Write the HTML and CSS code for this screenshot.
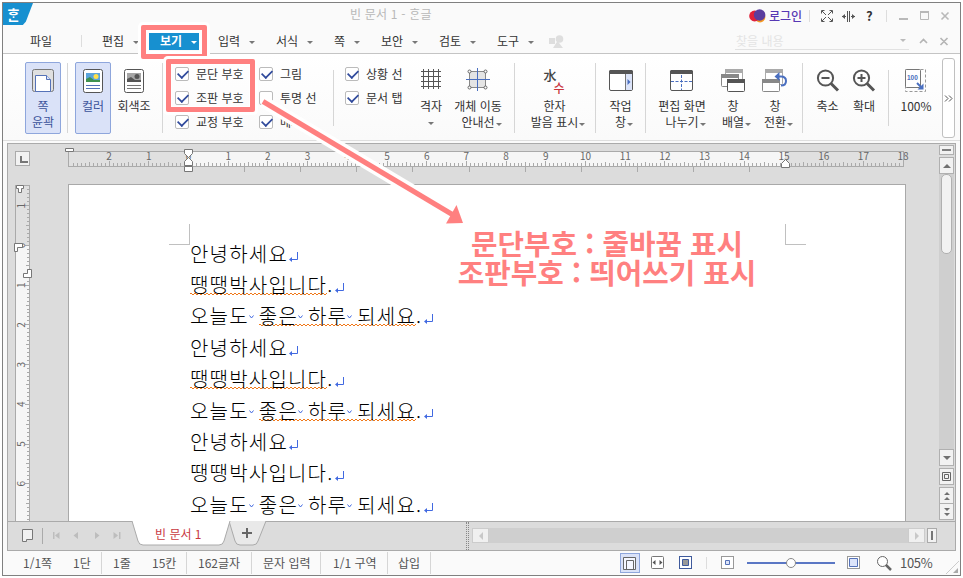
FILE: index.html
```html
<!DOCTYPE html>
<html lang="ko">
  <head>
    <meta charset="UTF-8" />
    <meta name="viewport" content="width=device-width, initial-scale=1.0" />
    <title>빈 문서 1 - ᄒᆞᆫ글</title>
    <link rel="stylesheet" href="styles.css">
  </head>
  <body>
    <div class="window">
      <header class="titlebar">
        <div class="app-logo"><span>ᄒᆞᆫ</span></div>
        <div class="doc-title">빈 문서 1 - ᄒᆞᆫ글</div>
        <div class="title-actions">
          <svg class="account-icon" width="17" height="14" viewBox="0 0 17 14">
            <circle cx="11" cy="8" r="5.4" fill="#f59a23" />
            <circle cx="5.6" cy="7" r="5.4" fill="#e0213a" />
            <circle cx="10.6" cy="6" r="5.8" fill="#5a3d9e" />
          </svg>
          <span class="login">로그인</span>
          <i class="bar"></i>
          <svg class="ic-full" width="12" height="12" viewBox="0 0 12 12" fill="none" stroke="#555">
            <path d="M.5 3.5v-3h3M8.500 .5h3v3M11.500 8.500v3h-3M3.500 11.500h-3v-3M1 1l4 4M11 1L7 5M11 11L7 7M1 11l4-4" />
          </svg>
          <svg class="ic-split" width="13" height="11" viewBox="0 0 13 11" fill="none" stroke="#555">
            <path d="M5.500 0v11M7.500 0v11M0 5.500h4M9 5.500h4" />
            <path d="M0 5.500l3-2.500v5zM13 5.500l-3-2.500v5z" fill="#555" stroke="none" />
          </svg>
          <span class="help">?</span>
          <i class="bar bar-win"></i>
          <svg class="ic-win" width="51" height="12" viewBox="0 0 51 12" fill="none" stroke="#b9b9b9">
            <path d="M0 9h9" stroke-width="2" />
            <path d="M21.500 2.500h8v7h-8z" />
            <path d="M21 2h9" stroke-width="2" />
            <path d="M42.500 2.500l7 7M49.500 2.500l-7 7" stroke-width="1.600" />
          </svg>
        </div>
      </header>

      <nav class="menubar">
        <span class="menu file">파일</span>
        <i class="bar"></i>
        <span class="menu first">편집<b class="caret"></b></span>
        <span class="menu active">보기<b class="caret"></b></span>
        <span class="menu">입력<b class="caret"></b></span>
        <span class="menu">서식<b class="caret"></b></span>
        <span class="menu short">쪽<b class="caret"></b></span>
        <span class="menu">보안<b class="caret"></b></span>
        <span class="menu">검토<b class="caret"></b></span>
        <span class="menu last">도구<b class="caret"></b></span>
        <svg width="15" height="13" viewBox="0 0 15 13" fill="#dedede">
          <path d="M0 3h6v6H0zM4 13l4.500-7 5.500 7z" />
          <circle cx="10.500" cy="4" r="3.800" />
        </svg>
        <div class="search"><span>찾을 내용</span><b class="caret"></b></div>
        <svg class="menu-tools" width="32" height="10" viewBox="0 0 32 10" fill="none" stroke="#b4b4b4" stroke-width="1.600">
          <path d="M1 7l3.500-3.500L8 7M21.500 2l7 7M28.500 2l-7 7" />
        </svg>
      </nav>

      <section class="ribbon">
        <div class="tool outline selected">
          <svg width="22" height="24" viewBox="0 0 22 24" fill="none">
            <rect x=".5" y=".5" width="21" height="22" rx="2" fill="#e0e0e0" stroke="#777" />
            <path d="M3.500 22.500v-16h11l4 4v12z" fill="#fff" stroke="#5572b8" />
            <path d="M14.500 6.500v4h4" stroke="#5572b8" fill="#dce4f9" />
          </svg>
          <span>쪽</span><span>윤곽</span>
        </div>
        <i class="sep sep-a"></i>
        <div class="tool color selected">
          <svg width="20" height="24" viewBox="0 0 20 24" fill="none">
            <rect x=".5" y=".5" width="19" height="23" rx="2" fill="#fff" stroke="#555" />
            <rect x="3" y="4" width="14" height="9" fill="#5ba4dc" />
            <path d="M3 13v-3l4-2 4 3h6v2z" fill="#3f9150" />
            <circle cx="13" cy="7.500" r="2.500" fill="#ffe04a" />
            <path d="M3 16.500h14M3 19.500h14" stroke="#5572b8" />
          </svg>
          <span>컬러</span>
        </div>
        <div class="tool gray">
          <svg width="20" height="24" viewBox="0 0 20 24" fill="none">
            <rect x=".5" y=".5" width="19" height="23" rx="2" fill="#fff" stroke="#555" />
            <rect x="3" y="4" width="14" height="9" fill="#a5a5a5" />
            <path d="M3 13v-3l4-2 4 3h6v2z" fill="#555" />
            <circle cx="13" cy="7.500" r="2.500" fill="#555" />
            <path d="M3 16.500h14M3 19.500h14" stroke="#777" />
          </svg>
          <span>회색조</span>
        </div>
        <i class="sep sep-b"></i>
        <div class="checks checks-marks">
          <label><i class="check on"></i>문단 부호</label>
          <label><i class="check on"></i>조판 부호</label>
          <label><i class="check on"></i>교정 부호</label>
        </div>
        <div class="checks checks-show">
          <label><i class="check on"></i>그림</label>
          <label><i class="check"></i>투명 선</label>
          <label><i class="check on"></i>메모</label>
        </div>
        <i class="sep sep-c"></i>
        <div class="checks checks-ui">
          <label><i class="check on"></i>상황 선</label>
          <label><i class="check on"></i>문서 탭</label>
        </div>
        <div class="tool grid">
          <svg width="20" height="24" viewBox="0 0 20 24" fill="none" stroke="#555">
            <path d="M2.500 0v20M7.500 0v20M12.500 0v20M17.500 0v20M0 2.500h20M0 7.500h20M0 12.500h20M0 17.500h20" />
          </svg>
          <span>격자</span><span class="drop"><b class="caret"></b></span>
        </div>
        <div class="tool guide">
          <svg width="24" height="24" viewBox="0 0 24 24" fill="none">
            <rect x="3.500" y="2.500" width="16" height="16" fill="#e4e4e4" stroke="#888" />
            <path d="M11.500 -1v23M0 10.500h24" stroke="#4a6fc0" />
            <g fill="#fff" stroke="#666"><circle cx="3.500" cy="2.500" r="1.500" /><circle cx="19.500" cy="2.500" r="1.500" /><circle cx="3.500" cy="18.500" r="1.500" /><circle cx="19.500" cy="18.500" r="1.500" /></g>
          </svg>
          <span>개체 이동</span><span>안내선<b class="caret"></b></span>
        </div>
        <i class="sep sep-d"></i>
        <div class="tool hanja">
          <div class="hanja-icon"><b>水</b><em>수</em></div>
          <span>한자</span><span>발음 표시<b class="caret"></b></span>
        </div>
        <i class="sep"></i>
        <div class="tool pane">
          <svg width="24" height="24" viewBox="0 0 24 24" fill="none">
            <rect x=".5" y="1.500" width="23" height="20" rx="1.500" fill="#fff" stroke="#555" />
            <path d="M0 4V2.500Q0 1 1.500 1h21Q24 1 24 2.500V5H0z" fill="#555" />
            <path d="M16.500 5h6.500v16h-6.500z" fill="#dce4f9" />
            <path d="M16.500 5v16" stroke="#777" /><path d="M18.500 10v6l3-3z" fill="#4a6fc0" />
          </svg>
          <span>작업</span><span>창<b class="caret"></b></span>
        </div>
        <i class="sep"></i>
        <div class="tool divide">
          <svg width="24" height="24" viewBox="0 0 24 24" fill="none">
            <rect x=".5" y="1.500" width="22" height="20" rx="1.500" fill="#fff" stroke="#555" />
            <path d="M0 5V2.500Q0 1 1.500 1h20Q23 1 23 2.500V5z" fill="#555" />
            <path d="M11.500 6v15M1 12.500h21" stroke="#4a6fc0" stroke-dasharray="3 1.500" />
          </svg>
          <span>편집 화면</span><span>나누기<b class="caret"></b></span>
        </div>
        <div class="tool arrange">
          <svg width="24" height="24" viewBox="0 0 24 24">
            <rect x="4.500" y=".5" width="17" height="12" rx="1" fill="#fff" stroke="#aaa" /><path d="M4 0h18v4H4z" fill="#aaa" />
            <rect x=".5" y="5.500" width="17" height="12" rx="1" fill="#fff" stroke="#888" /><path d="M0 5h18v4H0z" fill="#888" />
            <rect x="6.500" y="10.500" width="17" height="12" rx="1" fill="#fff" stroke="#555" /><path d="M6 10h18v4H6z" fill="#555" />
          </svg>
          <span>창</span><span>배열<b class="caret"></b></span>
        </div>
        <div class="tool switch">
          <svg width="26" height="24" viewBox="0 0 26 24">
            <rect x="3.500" y=".5" width="17" height="15" rx="1" fill="#fff" stroke="#aaa" /><path d="M3 0h18v4H3z" fill="#aaa" />
            <rect x=".5" y="10.500" width="17" height="12" rx="1" fill="#fff" stroke="#888" /><path d="M0 10h18v4H0z" fill="#888" />
            <path d="M16 7.500h3q5 0 5 4.500t-5 4.500" fill="none" stroke="#4a6fc0" stroke-width="2" /><path d="M12.500 7.500l5-4.500v9z" fill="#4a6fc0" />
          </svg>
          <span>창</span><span>전환<b class="caret"></b></span>
        </div>
        <i class="sep"></i>
        <div class="tool zoom-out">
          <svg width="24" height="24" viewBox="0 0 24 24" fill="none" stroke="#555">
            <circle cx="9.500" cy="9" r="7.600" stroke-width="2" /><path d="M5.500 9h8" stroke-width="2" /><path d="M15 14.500l7 7" stroke-width="3" />
          </svg>
          <span>축소</span>
        </div>
        <div class="tool zoom-in">
          <svg width="24" height="24" viewBox="0 0 24 24" fill="none" stroke="#555">
            <circle cx="9.500" cy="9" r="7.600" stroke-width="2" /><path d="M5.500 9h8M9.500 5v8" stroke-width="2" /><path d="M15 14.500l7 7" stroke-width="3" />
          </svg>
          <span>확대</span>
        </div>
        <i class="sep sep-e"></i>
        <div class="tool full">
          <svg width="22" height="24" viewBox="0 0 22 24" fill="none">
            <rect x=".5" y=".5" width="20" height="22" stroke="#999" stroke-dasharray="3 2" />
            <rect x=".5" y=".5" width="15" height="18" rx="1" fill="#fff" stroke="#777" />
            <text x="2" y="11" class="hundred">100</text>
            <path d="M12 14l5 5" stroke="#4a6fc0" stroke-width="2" /><path d="M18.500 20.500v-6l-6 6z" fill="#4a6fc0" />
          </svg>
          <span>100%</span>
        </div>
        <div class="more">
          <svg width="9" height="7" viewBox="0 0 9 7" fill="none" stroke="#555"><path d="M1 .5l3 3-3 3M5 .5l3 3-3 3" /></svg>
        </div>
      </section>

      <main class="workspace">
        <div class="editor">
          <div class="side">
            <div class="tab-type"></div>
            <svg id="vruler" width="18" height="337" viewBox="0 0 18 337"></svg>
          </div>
          <div class="canvas">
            <svg id="hruler" width="846" height="28" viewBox="0 0 846 28"></svg>
            <article class="page">
              <i class="crop crop-left"></i>
              <i class="crop crop-right"></i>
              <div id="lines"></div>
            </article>
          </div>
          <div class="vscroll">
            <div class="sbtn split"><svg width="9" height="2"><path d="M0 0h9v2H0z" fill="#808080" /></svg></div>
            <div class="sbtn up"><svg width="8" height="4"><path d="M0 4l4-4 4 4z" fill="#707070" /></svg></div>
            <div class="track"><div class="thumb"></div></div>
            <div class="sbtn"><svg width="8" height="4"><path d="M0 0h8L4 4z" fill="#707070" /></svg></div>
            <div class="sbtn target"><svg width="9" height="9" fill="none" stroke="#666"><path d="M.5.5h8v8h-8zM2.500 2.500h4v4h-4z" /></svg></div>
            <div class="sbtn prev"><svg width="6" height="8" fill="#707070"><path d="M0 3l3-3 3 3zM0 8l3-3 3 3z" /></svg></div>
            <div class="sbtn next"><svg width="6" height="8" fill="#707070"><path d="M0 0h6L3 3zM0 5h6L3 8z" /></svg></div>
          </div>
        </div>
        <div class="tabstrip">
          <svg class="tab-nav" width="102" height="18" viewBox="0 0 102 18" fill="none">
            <path d="M1.500 2.500h10v10h-6v2h-4z" stroke="#777" fill="#f0f0f0" />
            <path d="M21.500 1v16" stroke="#aaa" />
            <g fill="#bdbdbd"><path d="M32 5h1.500v7H32zM38.500 5v7L34 8.500zM57 5v7l-4.500-3.500zM74 5v7l4.500-3.500zM92.500 5v7L97 8.500zM98 5h1.500v7H98z" /></g>
          </svg>
          <div class="doc-tab">
            <svg width="138" height="26" viewBox="0 0 138 26">
              <path d="M97 0l6 20q1 4 5 4h13q4 0 5-4l8-20" fill="#e9e9e9" stroke="#aaa" />
              <path d="M0 0l6 20q1 4 5 4h76q4 0 5-4l6-20" fill="#fff" stroke="#aaa" />
              <path d="M110 12h10M115 7v10" stroke="#666" stroke-width="2" />
            </svg>
            <span>빈 문서 1</span>
          </div>
          <i class="grip"></i>
          <div class="hscroll">
            <div class="hbtn"><svg width="4" height="8"><path d="M4 0v8L0 4z" fill="#c8c8c8" /></svg></div>
            <div class="htrack"></div>
            <div class="hbtn"><svg width="4" height="8"><path d="M0 0v8l4-4z" fill="#c8c8c8" /></svg></div>
          </div>
          <div class="hsplit"><i></i></div>
        </div>
      </main>

      <footer class="status">
        <span class="st-page">1/1쪽</span><span class="st-col">1단</span>
        <span class="st-line">1줄</span><span class="st-char">15칸</span>
        <span class="st-count">162글자</span><span class="st-mode">문자 입력</span>
        <span class="st-section">1/1 구역</span><span class="st-insert">삽입</span>
        <div class="view-tools">
          <div class="view-btn on"><svg width="14" height="14" fill="#f5f7ff" stroke="#666"><path d="M.5.5h12v12H.5zM3.500 12.500v-9h7v9" /></svg></div>
          <svg class="v-width" width="14" height="14" fill="none" stroke="#777"><rect x=".5" y=".5" width="12" height="12" rx="1" fill="#fff" /><path d="M1.500 6.500l3-2.500v5zM11.500 6.500l-3-2.500v5z" fill="#555" stroke="none" /></svg>
          <svg class="v-whole" width="14" height="14"><rect x=".5" y=".5" width="12" height="12" fill="#fff" stroke="#3f5a9c" /><path d="M3.500 3.500h6v6h-6z" fill="#999" stroke="#3f5a9c" /></svg>
          <i class="bar"></i>
          <svg class="v-small" width="14" height="14"><rect x=".5" y=".5" width="12" height="12" fill="#fff" stroke="#999" /><path d="M4.500 4.500h4v4h-4z" fill="#dce4f9" stroke="#5572b8" /></svg>
          <div class="slider"><i></i></div>
          <svg class="v-large" width="14" height="14"><rect x=".5" y=".5" width="12" height="12" fill="#fff" stroke="#999" /><path d="M2.500 2.500h8v8h-8z" fill="#dce4f9" stroke="#5572b8" /></svg>
          <svg class="v-zoom" width="16" height="15" fill="none" stroke="#666"><circle cx="5.500" cy="5.500" r="5" fill="#fff" /><path d="M9 9l5 5" stroke-width="2.500" /></svg>
          <span class="percent">105%</span>
          <svg class="resize" width="15" height="15" fill="none" stroke="#ccc"><path d="M1 14L14 1" /><path d="M8 13h5V8z" fill="#aaa" stroke="none" /></svg>
        </div>
      </footer>
    </div>

    <!-- tutorial callouts -->
    <div class="callout callout-menu"></div>
    <div class="callout callout-checks"></div>
    <svg class="arrow" width="210" height="132" viewBox="0 0 210 132">
      <path d="M3 5.500L196 120.500" stroke="#fff" stroke-width="12" />
      <path d="M3 5.500L194 119.500" stroke="#ff8080" stroke-width="5" />
      <path d="M203 127l-6.500-18L186 127.500z" fill="#ff8080" />
    </svg>
    <div class="note">
      <div>문단부호 : 줄바꿈 표시</div>
      <div>조판부호 : 띄어쓰기 표시</div>
    </div>

    <script>
      // Horizontal ruler, 0 sits at the left text margin
      const CM = 39.7;
      let h = '<path class="r-off" d="M8 7h836v15H8z" /><path class="r-on" d="M128 7h597v15H128z" />';
      for (let i = -30; i <= 179; i++) {
        const x = Math.round(128 + (i * CM) / 10) + 0.5;
        if (x < 10 || x > 843) continue;
        const len = i % 10 === 0 ? 5 : i % 5 === 0 ? 4 : 3;
        h += `<path d="M${x} ${22 - len}v${len}" />`;
      }
      for (let i = -2; i <= 18; i++) {
        h += `<text x="${128.5 + i * CM}" y="16">${Math.abs(i)}</text>`;
      }
      for (let i = 1; i <= 10; i++) {
        h += `<path d="M${Math.round(128 + i * 56.1) + 0.5} 22v6" />`;
      }
      h += '<path d="M8 7.500h836M8 22.500h836M8.500 5v18M843.500 7v16" />';
      h += '<path class="knob" d="M5.500 4.500h8v3h-8zM124.500 5.500h8v4l-4 4 4 4v4h-8v-4l4-4-4-4zM124.500 22.500h8v5h-8zM721.500 23.500v-4l4-4 4 4v4z" />';
      document.getElementById("hruler").innerHTML = h;

      // Vertical ruler
      let v = '<path class="r-off" d="M1 0h14v60H1z" /><path class="r-on" d="M1 60h14v277H1z" />';
      for (let i = -14; i <= 69; i++) {
        const y = Math.round(60 + (i * CM) / 10) + 0.5;
        const len = i % 10 === 0 ? 5 : i % 5 === 0 ? 4 : 3;
        v += `<path d="M${15 - len} ${y}h${len}" />`;
      }
      for (let i = -1; i <= 6; i++) {
        v += `<text transform="translate(9.500 ${60.5 + i * CM}) rotate(-90)">${Math.abs(i)}</text>`;
      }
      v += '<path d="M.5 0v337M14.500 0v337M0 .5h15" />';
      v += '<path class="knob" d="M1.500.5h7v3h-2v4h-3v-4h-2zM-.5 58.500h8v4h-5v4h-3zM8.500 88.500v4h8v-8h-4v4z" />';
      document.getElementById("vruler").innerHTML = v;

      // Document text with paragraph and space marks
      const enter = '<svg class="enter" width="10" height="10"><path d="M8.500 0v7.500H3" fill="none" stroke="#4169e1" /><path d="M0 7.500L3 5v5z" fill="#4169e1" /></svg>';
      const gap = '<svg class="gap" width="10" height="5"><path d="M.5.5l2 2.500 2-2.500" fill="none" stroke="#4169e1" /></svg>';
      let html = "";
      for (let i = 0; i < 3; i++) {
        const typo = i < 2 ? "typo" : "";
        html += `<p>안녕하세요${enter}</p>`;
        html += `<p class="dot"><span class="${typo}">땡땡박사입니다</span>.${enter}</p>`;
        html += `<p class="dot">오늘도${gap}<span class="${typo}">좋은${gap}하루${gap}되세요</span>.${enter}</p>`;
      }
      document.getElementById("lines").innerHTML = html;
    </script>
  </body>
</html>
```
FILE: styles.css
```css
* {
  box-sizing: border-box;
}
body {
  margin: 0;
  padding: 2px;
  height: 578px;
  overflow: hidden;
  background: #fff;
  color: #333;
  font: 12px/16px "Noto Sans CJK KR", "Noto Sans", sans-serif;
}
svg {
  flex-shrink: 0;
  overflow: visible;
}
.window {
  width: 959px;
  height: 574px;
  border: 1px solid #808080;
  background: #fafafa;
}
.bar {
  width: 1px;
  height: 12px;
  background: #ddd;
}
.caret {
  display: inline-block;
  width: 0;
  border: 3px solid transparent;
  border-top: 3px solid #777;
  border-bottom: 0;
}

/* title bar */
.titlebar {
  display: flex;
  height: 26px;
  align-items: center;
}
.app-logo {
  width: 30px;
  height: 22px;
  align-self: flex-start;
  padding: 3px 0 0 4px;
  background: #1790d0;
  clip-path: polygon(0 0, 100% 0, 76% 85%, 66% 100%, 0 100%);
  color: #fff;
  font-size: 14px;
  font-weight: bold;
}
.doc-title {
  margin: 0 0 4px 317px;
  color: #b8b8b8;
  letter-spacing: 0.2px;
}
.title-actions {
  display: flex;
  align-items: center;
  margin-left: auto;
  padding-right: 10px;
}
.login {
  margin-left: 3px;
  width: 40px;
  color: #5738b4;
  font-weight: 500;
}
.ic-full {
  margin-left: 11px;
}
.ic-split {
  margin-left: 9px;
}
.help {
  width: 20px;
  margin-left: 11px;
  font-weight: bold;
  font-size: 13px;
}
.bar-win {
  margin-right: 12px;
}

/* menu */
.menubar {
  display: flex;
  height: 25px;
  align-items: center;
  border-bottom: 1px solid #c4c4c4;
}
.menu {
  display: flex;
  align-items: center;
  width: 58px;
  height: 18px;
  padding-left: 11px;
}
.menu .caret {
  margin: 2px 0 0 9px;
}
.menu.file {
  width: 78px;
  padding-left: 27px;
}
.menu.first {
  width: 67px;
  padding-left: 20px;
}
.menu.short {
  width: 47px;
}
.menu.active {
  width: 50px;
  margin-right: 8px;
  background: #1790d0;
  color: #fff;
  font-weight: bold;
}
.menu.active .caret {
  border-top-color: #fff;
}
.menu.last {
  margin-right: 5px;
}
.search {
  display: flex;
  justify-content: space-between;
  align-items: center;
  width: 174px;
  margin-left: auto;
  padding: 0 3px 0 1px;
  border-bottom: 1px solid #e2e2e2;
  color: #e4e4e4;
}
.search .caret {
  border-top-color: #bbb;
}
.menu-tools {
  margin: 0 9px 0 10px;
}

/* ribbon */
.ribbon {
  display: flex;
  height: 87px;
  padding: 4px 5px 3px 22px;
  background: linear-gradient(#fff, #fafafa);
  border-bottom: 1px solid #dedede;
}
.sep {
  flex: none;
  width: 1px;
  height: 70px;
  margin-top: 5px;
  background: #d6d6d6;
}
.sep-a {
  margin: 5px 7px 0 6px;
}
.sep-b {
  margin: 5px 12px 0 5px;
}
.sep-c {
  height: 56px;
  margin: 12px 11px 0 0;
}
.sep-d {
  margin-left: 9px;
}
.sep-e {
  height: 56px;
  margin: 12px 0 0 12px;
}
.tool {
  display: flex;
  flex: none;
  flex-direction: column;
  align-items: center;
  height: 72px;
  margin-top: 4px;
  padding-top: 7px;
  white-space: nowrap;
}
.tool svg {
  margin-bottom: 5px;
}
.tool span .caret {
  margin: 0 -7px 1px 1px;
}
.tool span.drop .caret {
  margin: 0 0 2px;
}
.selected {
  border: 1px solid #8ea6dc;
  border-radius: 2px;
  background: #dae2f8;
  padding-top: 6px;
  color: #3a529a;
}
.outline,
.color {
  width: 36px;
}
.gray {
  width: 46px;
}
.grid {
  width: 40px;
}
.guide {
  width: 54px;
}
.hanja {
  width: 79px;
  margin-right: 1px;
}
.pane {
  width: 49px;
}
.divide {
  width: 72px;
}
.arrange {
  width: 30px;
}
.switch {
  width: 54px;
}
.zoom-out {
  width: 49px;
}
.zoom-in {
  width: 24px;
}
.full {
  width: 53px;
  padding-left: 1px;
}
.hundred {
  fill: #4a6fc0;
  font: bold 6.5px "Liberation Sans", sans-serif;
}
.hanja-icon {
  display: flex;
  width: 22px;
  height: 29px;
  font-size: 13px;
  line-height: 12px;
}
.hanja-icon b {
  color: #444;
  font-weight: 500;
}
.hanja-icon em {
  margin: 13px 0 0 -3px;
  color: #c8343c;
  font-size: 12px;
  font-style: normal;
  font-weight: 500;
}
.checks {
  flex: none;
  padding-top: 4px;
  white-space: nowrap;
}
.checks label {
  display: flex;
  align-items: center;
  height: 24px;
}
.checks-marks {
  width: 84px;
}
.checks-show {
  width: 74px;
}
.checks-ui {
  width: 66px;
}
.check {
  width: 14px;
  height: 14px;
  margin-right: 7px;
  border: 1px solid #bbb;
  border-radius: 2px;
  background: #fff;
}
.check.on::before {
  content: "";
  display: block;
  width: 10px;
  height: 6px;
  margin: 1px 0 0 1px;
  border: solid #304a9c;
  border-width: 0 0 2.5px 2.5px;
  transform: rotate(-45deg) scale(0.85);
}
.more {
  display: flex;
  flex: none;
  align-items: center;
  justify-content: center;
  width: 13px;
  height: 80px;
  border: 1px solid #c0c0c0;
  border-radius: 3px;
  background: #fff;
}

/* workspace */
.workspace {
  width: 949px;
  height: 408px;
  margin: 2px 0 0 4px;
  border: 1px solid #aaa;
  background: #dcdcdc;
}
.editor {
  display: flex;
  height: 377px;
  overflow: hidden;
}
.side {
  flex: none;
  width: 52px;
  padding: 7px 0 0 7px;
}
.tab-type {
  width: 15px;
  height: 15px;
  margin-bottom: 19px;
  padding: 4px 0 0 4px;
  border: 1px solid #aaa;
  background: #f2f2f2;
}
.tab-type::before {
  content: "";
  display: block;
  width: 6px;
  height: 5px;
  border: solid #777;
  border-width: 0 0 2px 2px;
}
#vruler,
#hruler {
  display: block;
  fill: none;
  stroke: #aaa;
}
#vruler text,
#hruler text {
  fill: #666;
  stroke: none;
  font-size: 10px;
  text-anchor: middle;
}
#vruler .r-off,
#hruler .r-off {
  fill: #e0e0e0;
  stroke: none;
}
#vruler .r-on,
#hruler .r-on {
  fill: #f6f6f6;
  stroke: none;
}
#vruler .knob,
#hruler .knob {
  fill: #fff;
  stroke: #777;
}
.canvas {
  flex: none;
  width: 879px;
}
.page {
  position: relative;
  width: 838px;
  height: 400px;
  margin: 12px 0 0 8px;
  padding: 53px 0 0 121px;
  border: 1px solid #a9a9a9;
  background: #fff;
}
.page p {
  display: flex;
  height: 31.4px;
  margin: 0;
  align-items: center;
  color: #000;
  font-size: 20px;
  font-weight: 300;
  letter-spacing: 1.2px;
  line-height: 28px;
}
.page span {
  display: flex;
  align-items: center;
}
.typo {
  height: 20px;
  background:
    repeating-linear-gradient(90deg, #f07818 0 2px, transparent 2px 4px) 0 18px / 100% 1px no-repeat,
    repeating-linear-gradient(90deg, transparent 0 2px, #f07818 2px 4px) 0 19px / 100% 1px no-repeat;
}
.enter {
  margin: 6px 0 0 1px;
}
.dot .enter {
  margin-left: 2px;
}
.gap {
  margin-top: 3px;
}
.crop {
  position: absolute;
  top: 39px;
  width: 21px;
  height: 21px;
  border-bottom: 1px solid #c0c0c0;
}
.crop-left {
  left: 100px;
  border-right: 1px solid #c0c0c0;
}
.crop-right {
  left: 716px;
  border-left: 1px solid #c0c0c0;
}
.vscroll {
  display: flex;
  flex: none;
  flex-direction: column;
  width: 15px;
  padding: 1px 0;
}
.sbtn {
  display: flex;
  flex: none;
  align-items: center;
  justify-content: center;
  height: 17px;
  border: 1px solid #b0b0b0;
  background: #f2f2f2;
}
.split {
  height: 10px;
  margin-bottom: 2px;
}
.track {
  flex: 1;
  padding: 0 2px;
  background: #cfcfcf;
}
.thumb {
  width: 11px;
  height: 80px;
  border: 1px solid #b0b0b0;
  border-radius: 5px;
  background: #f2f2f2;
}
.target {
  margin: 2px 0;
}
.next {
  margin-top: -1px;
}

/* document tabs */
.tabstrip {
  display: flex;
  height: 29px;
  border-top: 1px solid #aaa;
}
.tab-nav {
  margin: 5px 0 0 13px;
}
.doc-tab {
  position: relative;
  width: 138px;
  margin-left: 9px;
}
.doc-tab svg {
  display: block;
  margin-top: -1px;
}
.doc-tab span {
  position: absolute;
  top: 4px;
  left: 23px;
  color: #c9393f;
}
.grip {
  width: 3px;
  height: 28px;
  margin-left: 196px;
  border: dotted #888;
  border-width: 0 1px;
}
.hscroll {
  display: flex;
  width: 453px;
  height: 15px;
  margin: 6px 0 0 3px;
}
.hbtn {
  display: flex;
  flex: none;
  align-items: center;
  justify-content: center;
  width: 17px;
  border: 1px solid #ccc;
  background: #f0f0f0;
}
.htrack {
  flex: 1;
  background: #cfcfcf;
}
.hsplit {
  width: 10px;
  height: 15px;
  margin: 6px 0 0 2px;
  padding: 2px 3px;
  border: 1px solid #aaa;
  background: #f2f2f2;
}
.hsplit i {
  display: block;
  width: 2px;
  height: 9px;
  background: #777;
}

/* status bar */
.status {
  display: flex;
  height: 24px;
  align-items: center;
  padding-left: 20px;
  color: #555;
}
.status > span {
  flex: none;
  height: 22px;
  line-height: 22px;
  border-right: 1px solid #d6d6d6;
}
.status .st-page {
  width: 50px;
  border: 0;
}
.st-col {
  width: 29px;
}
.status .st-line {
  width: 50px;
  padding-left: 11px;
  border: 0;
}
.st-char {
  width: 35px;
}
.st-count {
  width: 65px;
  padding-left: 11px;
}
.st-mode {
  width: 69px;
  padding-left: 11px;
}
.st-section {
  width: 67px;
  padding-left: 12px;
}
.st-insert {
  width: 43px;
  padding-left: 10px;
}
.view-tools {
  display: flex;
  align-items: center;
  margin-left: auto;
}
.view-btn {
  display: flex;
  width: 20px;
  height: 20px;
  padding: 3px 0 0 2px;
  border: 1px solid #8ea6dc;
  background: #dae2f8;
}
.v-width {
  margin-left: 11px;
}
.v-whole {
  margin: 0 13px 0 14px;
}
.v-small {
  margin-left: 14px;
}
.slider {
  width: 88px;
  height: 2px;
  margin: 0 12px;
  background: #5a77c4;
}
.slider i {
  display: block;
  width: 10px;
  height: 10px;
  margin: -4px 0 0 39px;
  border: 1px solid #888;
  border-radius: 50%;
  background: #fff;
}
.v-zoom {
  margin: 0 7px 0 16px;
}
.percent {
  width: 45px;
  font-size: 13px;
  letter-spacing: -0.3px;
}
.resize {
  margin-top: 8px;
}

/* callouts over the window */
.callout {
  position: absolute;
  border: 5px solid #ff8080;
  border-radius: 2px;
  box-shadow: 0 0 0 3px #fff, inset 0 0 0 1px #fff;
}
.callout-menu {
  top: 25px;
  left: 141px;
  width: 66px;
  height: 34px;
  border-width: 5px;
  box-shadow: 0 0 0 3px #fff, inset 0 0 0 3px #fff;
}
.callout-checks {
  top: 59px;
  left: 166px;
  width: 89px;
  height: 53px;
}
.arrow {
  position: absolute;
  top: 96px;
  left: 260px;
}
.note {
  position: absolute;
  top: 229px;
  left: 447px;
  width: 320px;
  color: #ff8080;
  font-size: 28.8px;
  font-weight: bold;
  line-height: 28.5px;
  text-align: center;
  white-space: nowrap;
}
```
